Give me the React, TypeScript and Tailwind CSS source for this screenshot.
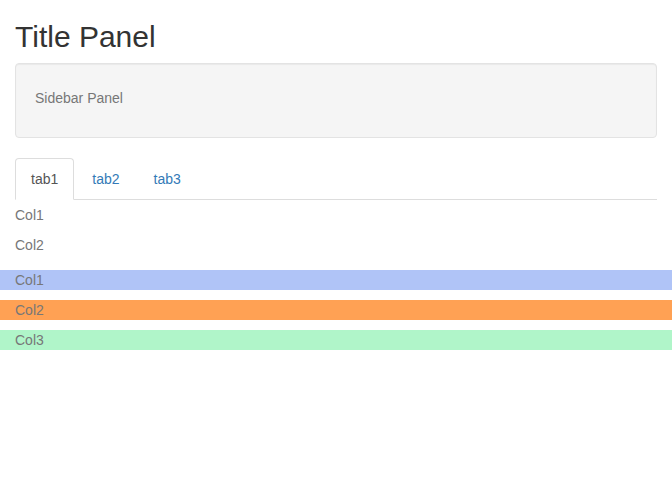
const font = { fontFamily: '"Liberation Sans", Arial, sans-serif' };

export default function App() {
  return (
    <div className="min-h-[480px] bg-white text-[14px] leading-[20px] text-[#333]" style={font}>
      <div className="px-[15px]">
        <h2 className="mt-[20px] mb-[10px] text-[30px] leading-[33px] font-normal text-[#333]">Title Panel</h2>
        <div className="h-[75px] rounded-[4px] border border-[#e3e3e3] bg-[#f5f5f5] px-[19px] pt-[24px] pb-[29px] text-[#777] shadow-[inset_0_1px_1px_rgba(0,0,0,0.05)]">
          Sidebar Panel
        </div>
        <ul className="mt-[20px] flex border-b border-[#ddd]">
          <li className="-mb-px mr-[2px]">
            <span className="block rounded-t-[4px] border border-[#ddd] border-b-white bg-white px-[15px] py-[10px] text-[#555]">tab1</span>
          </li>
          <li className="-mb-px mr-[2px]">
            <span className="block border border-transparent px-[15px] py-[10px] text-[#337ab7]">tab2</span>
          </li>
          <li className="-mb-px mr-[2px]">
            <span className="block border border-transparent px-[15px] py-[10px] text-[#337ab7]">tab3</span>
          </li>
        </ul>
        <div className="text-[#777]">
          <div className="leading-[30px]">Col1</div>
          <div className="leading-[30px]">Col2</div>
        </div>
      </div>
      <div className="text-[#777]">
        <div className="mt-[10px] h-[20px] bg-[#b0c4f7] px-[15px]">Col1</div>
        <div className="mt-[10px] h-[20px] bg-[#ffa154] px-[15px]">Col2</div>
        <div className="mt-[10px] h-[20px] bg-[#b0f5c9] px-[15px]">Col3</div>
      </div>
    </div>
  );
}
